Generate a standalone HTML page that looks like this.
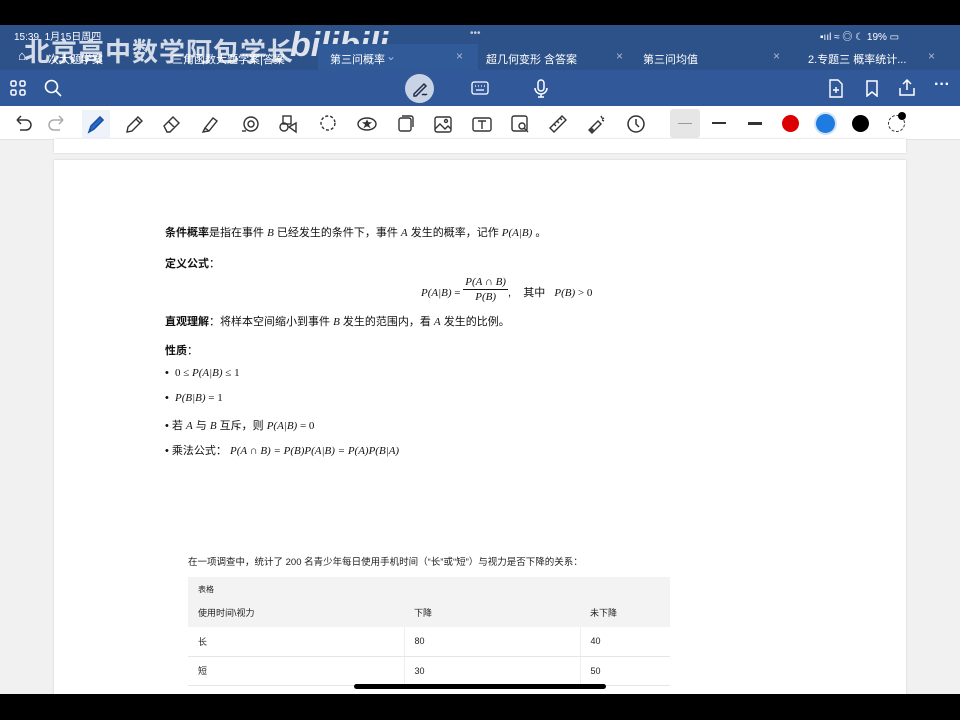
<!DOCTYPE html>
<html><head><meta charset="utf-8"><style>
*{margin:0;padding:0;box-sizing:border-box}
body{width:960px;height:720px;overflow:hidden;background:#f1f1f2;position:relative;font-family:"Liberation Sans","Noto Sans CJK SC",sans-serif;}
.a{position:absolute}
.top{left:0;top:0;width:960px;height:25px;background:#000}
.tabs{left:0;top:25px;width:960px;height:45px;background:#2d528a}
.tb{left:0;top:70px;width:960px;height:36px;background:#31599a}
.tools{left:0;top:106px;width:960px;height:34px;background:#fff;border-bottom:1px solid #e2e2e2}
.w{color:#fff}
.tab{font-size:11px;color:#fff;top:51px}
.x{color:#a8b8d0;font-size:12px;top:49px}
.page{background:#fff;box-shadow:0 0 2px #ccc}
.t{font-size:11px;color:#111}
.m{font-family:"Liberation Serif","DejaVu Serif",serif;font-style:italic}
.r{font-family:"Liberation Serif",serif;font-style:normal}
.ic{top:113px;width:22px;height:22px}
svg{display:block}
td{font-size:9px;color:#222;padding-left:10px;height:29px;border-bottom:1px solid #e6e6e6}
</style></head><body>
<div class="a top"></div>
<div class="a tabs"></div>
<div class="a tb"></div>
<div class="a tools"></div>
<div class="a w" style="left:14px;top:28px;font-size:10px">15:39&nbsp;&nbsp;1月15日周四</div>
<div class="a w" style="left:24px;top:32px;font-size:26px;font-weight:bold;color:#e8ecf2;opacity:.9;letter-spacing:1px">北京高中数学阿包学长</div>
<div class="a" style="left:290px;top:26px;font-size:34px;font-weight:bold;color:#dfe4ec;font-style:italic">bilibili</div>
<div class="a" style="left:470px;top:28px;color:#c0cce0;font-size:10px">•••</div>
<div class="a w" style="left:820px;top:28px;font-size:10px">▪ııl ≈ ◎ ☾ 19% ▭</div>
<div class="a" style="left:318px;top:44px;width:160px;height:26px;background:#315b98"></div>
<div class="a tab" style="left:18px;font-size:13px;top:48px">⌂</div>
<div class="a tab" style="left:48px">次大题学案</div>
<div class="a tab" style="left:172px">三角函数大题学案|答案</div>
<div class="a tab" style="left:330px">第三问概率</div>
<div class="a x" style="left:386px">⌄</div>
<div class="a x" style="left:456px">×</div>
<div class="a tab" style="left:486px">超几何变形 含答案</div>
<div class="a x" style="left:616px">×</div>
<div class="a tab" style="left:643px">第三问均值</div>
<div class="a x" style="left:773px">×</div>
<div class="a tab" style="left:808px">2.专题三 概率统计...</div>
<div class="a x" style="left:928px">×</div>
<!-- toolbar icons -->
<svg class="a" style="left:10px;top:80px" width="16" height="16" fill="none" stroke="#fff" stroke-width="1.5"><rect x="1" y="1" width="5" height="5" rx="1.5"/><rect x="10" y="1" width="5" height="5" rx="1.5"/><rect x="1" y="10" width="5" height="5" rx="1.5"/><rect x="10" y="10" width="5" height="5" rx="1.5"/></svg>
<svg class="a" style="left:44px;top:79px" width="18" height="18" fill="none" stroke="#fff" stroke-width="1.6"><circle cx="7.5" cy="7.5" r="6"/><path d="M12 12l5 5"/></svg>
<div class="a" style="left:405px;top:74px;width:29px;height:29px;border-radius:50%;background:#c8d4e6"></div>
<svg class="a" style="left:411px;top:80px" width="18" height="18" fill="none" stroke="#1c2c48" stroke-width="1.5"><path d="M3 14L13 4l2 2L5 16H3z"/><path d="M11 15c2-2 3 1 5-1"/></svg>
<svg class="a" style="left:471px;top:81px" width="18" height="14" fill="none" stroke="#fff" stroke-width="1.3"><rect x="1" y="1" width="16" height="12" rx="2"/><path d="M4 5h1M7 5h1M10 5h1M13 5h1M5 9h8"/></svg>
<svg class="a" style="left:534px;top:79px" width="14" height="19" fill="none" stroke="#fff" stroke-width="1.5"><rect x="4" y="1" width="6" height="11" rx="3"/><path d="M1 9a6 6 0 0012 0M7 15v3M4 18h6"/></svg>
<svg class="a" style="left:828px;top:79px" width="16" height="19" fill="none" stroke="#fff" stroke-width="1.4"><path d="M2 1h8l4 4v13H2z"/><path d="M8 8v6M5 11h6"/></svg>
<svg class="a" style="left:866px;top:80px" width="12" height="17" fill="none" stroke="#fff" stroke-width="1.5"><path d="M1 1h10v15l-5-4-5 4z"/></svg>
<svg class="a" style="left:898px;top:78px" width="18" height="18" fill="none" stroke="#fff" stroke-width="1.5"><path d="M9 12V2M5 6l4-4 4 4M2 10v7h14v-7"/></svg>
<div class="a w" style="left:934px;top:76px;font-size:16px;font-weight:bold">···</div>
<!-- tools row -->
<svg class="a ic" style="left:12px" fill="none" stroke="#333" stroke-width="1.5"><path d="M5 7h9a5 5 0 010 10H8M5 7l4-4M5 7l4 4"/></svg>
<svg class="a ic" style="left:46px" fill="none" stroke="#aaa" stroke-width="1.5"><path d="M17 7H8a5 5 0 000 10h6M17 7l-4-4M17 7l-4 4"/></svg>
<div class="a" style="left:82px;top:110px;width:28px;height:28px;background:#eef3fb"></div>
<svg class="a ic" style="left:85px" fill="none" stroke="#1b4fa0" stroke-width="1.6"><path d="M4 19l2-6 9-9 3 3-9 9z" fill="#2a6bd0"/></svg>
<svg class="a ic" style="left:123px" fill="none" stroke="#333" stroke-width="1.4"><path d="M4 19l1-5 10-10 4 4-10 10zM13 6l4 4"/></svg>
<svg class="a ic" style="left:161px" fill="none" stroke="#333" stroke-width="1.4"><path d="M3 13l9-9 6 6-9 9H6zM8 9l6 6"/></svg>
<svg class="a ic" style="left:199px" fill="none" stroke="#333" stroke-width="1.4"><path d="M4 19l2-4 8-10 4 3-8 10zM6 15l4 3"/></svg>
<svg class="a ic" style="left:239px" fill="none" stroke="#333" stroke-width="1.4"><circle cx="12" cy="11" r="7"/><circle cx="12" cy="11" r="3"/><path d="M3 18h4"/></svg>
<svg class="a ic" style="left:277px" fill="none" stroke="#333" stroke-width="1.4"><rect x="6" y="3" width="8" height="8"/><circle cx="7" cy="14" r="4"/><path d="M12 14l7-4v9z"/></svg>
<svg class="a ic" style="left:316px" fill="none" stroke="#333" stroke-width="1.4" stroke-dasharray="3 2"><circle cx="12" cy="10" r="7"/></svg>
<svg class="a ic" style="left:355px" fill="none" stroke="#333" stroke-width="1.4"><ellipse cx="12" cy="11" rx="9" ry="6"/><path d="M12 8l1 2h2l-2 1.5 1 2-2-1.2-2 1.2 1-2L9 10h2z" fill="#333"/></svg>
<svg class="a ic" style="left:394px" fill="none" stroke="#333" stroke-width="1.4"><rect x="5" y="5" width="12" height="13" rx="2"/><path d="M8 3h9a2 2 0 012 2v9"/></svg>
<svg class="a ic" style="left:432px" fill="none" stroke="#333" stroke-width="1.4"><rect x="3" y="4" width="16" height="15" rx="2"/><path d="M3 16l5-5 5 5 3-3 3 3"/><circle cx="14" cy="8" r="1.5"/></svg>
<svg class="a ic" style="left:471px" fill="none" stroke="#333" stroke-width="1.4"><rect x="2" y="5" width="18" height="13" rx="2"/><path d="M7 8h8M11 8v8"/></svg>
<svg class="a ic" style="left:509px" fill="none" stroke="#333" stroke-width="1.4"><rect x="3" y="3" width="15" height="15" rx="2"/><circle cx="13" cy="13" r="3"/><path d="M15 15l4 4"/></svg>
<svg class="a ic" style="left:547px" fill="none" stroke="#333" stroke-width="1.4"><path d="M3 15L15 3l4 4L7 19zM7 11l2 2M10 8l2 2M13 5l2 2"/></svg>
<svg class="a ic" style="left:586px" fill="none" stroke="#333" stroke-width="1.4"><path d="M3 17l9-9 3 3-9 9zM15 3l1 2M18 5l-2 1M18 8l-2-1"/><circle cx="6" cy="17" r="1"/></svg>
<svg class="a ic" style="left:625px" fill="none" stroke="#333" stroke-width="1.5"><circle cx="11" cy="11" r="8"/><path d="M11 6v5l3 3"/></svg>
<div class="a" style="left:670px;top:109px;width:30px;height:29px;background:#e6e6e6;border-radius:3px"></div>
<div class="a" style="left:678px;top:123px;width:14px;height:1px;background:#999"></div>
<div class="a" style="left:712px;top:122px;width:14px;height:2px;background:#333"></div>
<div class="a" style="left:748px;top:122px;width:14px;height:3px;background:#333"></div>
<div class="a" style="left:782px;top:115px;width:17px;height:17px;border-radius:50%;background:#d00"></div>
<div class="a" style="left:816px;top:114px;width:19px;height:19px;border-radius:50%;background:#1e7be0;box-shadow:0 0 0 2px #cfe2f8"></div>
<div class="a" style="left:852px;top:115px;width:17px;height:17px;border-radius:50%;background:#000"></div>
<div class="a" style="left:888px;top:115px;width:17px;height:17px;border-radius:50%;border:1.5px dashed #333"></div>
<div class="a" style="left:898px;top:112px;width:8px;height:8px;border-radius:50%;background:#000"></div>
<!-- pages -->
<div class="a page" style="left:54px;top:139px;width:852px;height:14px"></div>
<div class="a page" style="left:54px;top:160px;width:852px;height:560px"></div>
<div class="a t" style="left:165px;top:224px"><b>条件概率</b>是指在事件 <span class="m">B</span> 已经发生的条件下，事件 <span class="m">A</span> 发生的概率，记作 <span class="m">P(A|B)</span> 。</div>
<div class="a t" style="left:165px;top:255px"><b>定义公式</b>：</div>
<div class="a t" style="left:421px;top:276px;font-size:11px"><span class="m" style="position:relative;top:8px">P(A|B)</span><span class="r" style="position:relative;top:8px"> = </span><span style="display:inline-block;text-align:center;vertical-align:top"><span class="m" style="display:block;border-bottom:1px solid #111;padding:0 2px;line-height:13px">P(A ∩ B)</span><span class="m" style="display:block;line-height:14px">P(B)</span></span><span style="position:relative;top:8px">,&nbsp;&nbsp;&nbsp; 其中 &nbsp;&nbsp;<span class="m">P(B)</span><span class="r"> &gt; 0</span></span></div>
<div class="a t" style="left:165px;top:313px"><b>直观理解</b>：将样本空间缩小到事件 <span class="m">B</span> 发生的范围内，看 <span class="m">A</span> 发生的比例。</div>
<div class="a t" style="left:165px;top:342px"><b>性质</b>：</div>
<div class="a t" style="left:165px;top:367px">• &nbsp;<span class="r">0 ≤ </span><span class="m">P(A|B)</span><span class="r"> ≤ 1</span></div>
<div class="a t" style="left:165px;top:392px">• &nbsp;<span class="m">P(B|B)</span><span class="r"> = 1</span></div>
<div class="a t" style="left:165px;top:417px">• 若 <span class="m">A</span> 与 <span class="m">B</span> 互斥，则 <span class="m">P(A|B)</span><span class="r"> = 0</span></div>
<div class="a t" style="left:165px;top:442px">• 乘法公式： <span class="m">P(A ∩ B) = P(B)P(A|B) = P(A)P(B|A)</span></div>
<div class="a" style="left:188px;top:554px;font-size:9.5px;color:#222">在一项调查中，统计了 200 名青少年每日使用手机时间（“长”或“短”）与视力是否下降的关系：</div>
<div class="a" style="left:188px;top:577px;width:482px;height:50px;background:#f3f3f3"></div>
<div class="a" style="left:198px;top:584px;font-size:8px;color:#222">表格</div>
<table class="a" style="left:188px;top:598px;width:482px;border-collapse:collapse">
<tr><td style="width:216px;border:none">使用时间\视力</td><td style="width:176px;border:none">下降</td><td style="border:none">未下降</td></tr>
<tr><td>长</td><td style="border-left:1px solid #eee">80</td><td style="border-left:1px solid #eee">40</td></tr>
<tr><td>短</td><td style="border-left:1px solid #eee">30</td><td style="border-left:1px solid #eee">50</td></tr>
</table>
<div class="a" style="left:0;top:694px;width:960px;height:26px;background:#000"></div>
<div class="a" style="left:354px;top:684px;width:252px;height:5px;border-radius:3px;background:#000"></div>
</body></html>
